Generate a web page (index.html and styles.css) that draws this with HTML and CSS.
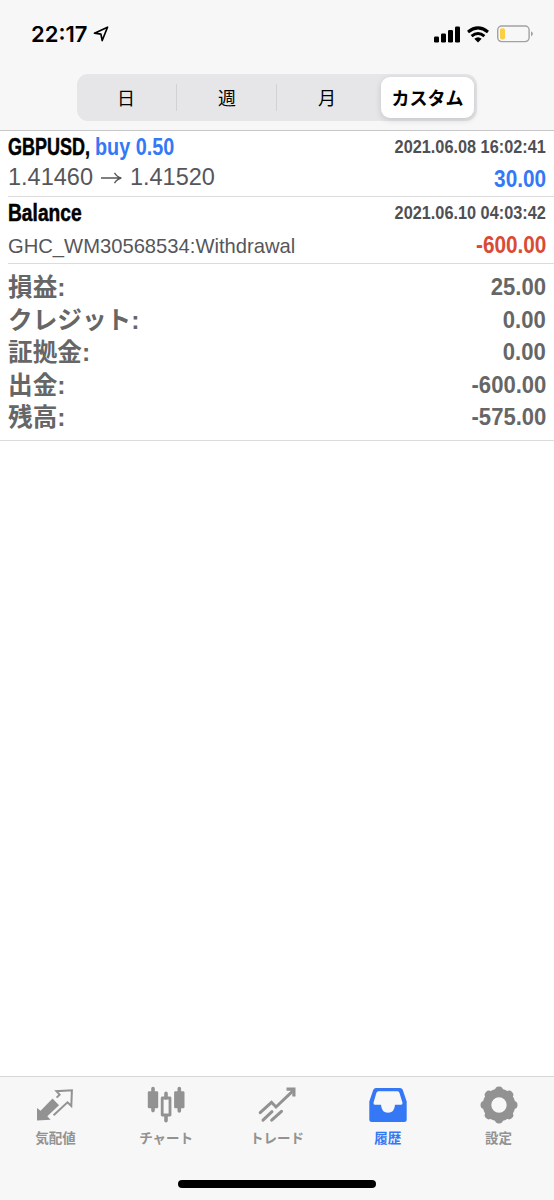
FILE: index.html
```html
<!DOCTYPE html>
<html lang="ja">

<head>
    <meta charset="UTF-8">
    <meta name="viewport" content="width=device-width, initial-scale=1.0">
    <title>履歴</title>
    <link rel="stylesheet" href="styles.css">
</head>

<body>
    <div class="app">
        <header>
            <div class="status">
                <span class="time">22:17</span>
                <svg class="location" width="16" height="16" viewBox="0 0 16 16">
                    <path d="M1.5 7.2 14.5 1.2 9.2 14.5 7.9 8.1Z" fill="none" stroke="#000" stroke-width="1.7" stroke-linejoin="round" />
                </svg>
                <svg class="signal" width="26" height="17" viewBox="0 0 26 17">
                    <rect x="0" y="10.5" width="5" height="6" rx="1.3" />
                    <rect x="7" y="7.5" width="5" height="9" rx="1.3" />
                    <rect x="14" y="4" width="5" height="12.5" rx="1.3" />
                    <rect x="21" y="0.5" width="5" height="16" rx="1.3" />
                </svg>
                <svg class="wifi" width="22" height="17" viewBox="1 0 22 17">
                    <g fill="none" stroke="#000" stroke-width="3">
                        <path d="M2 6Q12 -2.2 22 6" />
                        <path d="M5.6 10.2Q12 4.8 18.4 10.2" />
                    </g>
                    <path d="M8.3 12.7Q12 9.7 15.7 12.7L12 16.4Z" />
                </svg>
                <svg class="battery" width="37" height="18" viewBox="0 0 37 18">
                    <rect x=".7" y="1" width="31.4" height="15.6" rx="4" fill="none" stroke="#a2a2a4" stroke-width="1.4" />
                    <rect x="3" y="3.2" width="5" height="11.2" rx="1.8" fill="#fbcf43" />
                    <path d="M34 6.2Q38 8.8 34 11.5Z" fill="#a2a2a4" />
                </svg>
            </div>
            <div class="segment">
                <div class="seg">日</div>
                <div class="seg">週</div>
                <div class="seg">月</div>
                <div class="seg on">カスタム</div>
            </div>
        </header>

        <main>
            <ul class="history">
                <li>
                    <div class="row">
                        <p class="title"><span class="symbol">GBPUSD,</span><span class="side">buy 0.50</span></p>
                        <span class="date">2021.06.08 16:02:41</span>
                    </div>
                    <div class="row second">
                        <p class="price">1.41460 <svg width="23" height="14" viewBox="0 0 23 14"><path d="M1 7H21M14.5 1.8Q17 6 21.3 7Q17 8 14.5 12.2" fill="none" stroke="#56565a" stroke-width="1.3" /></svg> 1.41520</p>
                        <span class="num blue">30.00</span>
                    </div>
                </li>
                <li>
                    <div class="row">
                        <p class="title"><span class="balance">Balance</span></p>
                        <span class="date">2021.06.10 04:03:42</span>
                    </div>
                    <div class="row second">
                        <p class="comment">GHC_WM30568534:Withdrawal</p>
                        <span class="num red">-600.00</span>
                    </div>
                </li>
            </ul>
            <ul class="total">
                <li><span class="label">損益:</span><span class="num">25.00</span></li>
                <li><span class="label">クレジット:</span><span class="num">0.00</span></li>
                <li><span class="label">証拠金:</span><span class="num">0.00</span></li>
                <li><span class="label">出金:</span><span class="num">-600.00</span></li>
                <li><span class="label">残高:</span><span class="num">-575.00</span></li>
            </ul>
        </main>

        <footer>
            <nav>
                <div class="tab">
                    <svg width="40" height="40" viewBox="0 0 40 40">
                        <path d="M2 34.5V22L5.6 24.8 17.5 12.6 24 19.2 12.3 30.2 15.7 33.7Z" fill="#929292" />
                        <path d="M21.6 11.6 24.6 8.7 21.4 5.2 36.9 4.3 36.3 20 32.5 16.3 18.6 29.3" fill="none" stroke="#929292" stroke-width="2" />
                    </svg>
                    <p>気配値</p>
                </div>
                <div class="tab">
                    <svg width="40" height="40" viewBox="0 0 40 40">
                        <g fill="none" stroke="#929292" stroke-width="3.6" stroke-linecap="round">
                            <path d="M7 2.5V24.6M33.3 2.5V25M20 7.4V12M20 30V34.8" />
                        </g>
                        <rect x="1.8" y="5.2" width="10.4" height="17" rx="1.3" fill="#929292" />
                        <rect x="28.1" y="5.2" width="10.4" height="17" rx="1.3" fill="#929292" />
                        <rect x="16.2" y="12" width="7.8" height="17" fill="none" stroke="#929292" stroke-width="2.8" stroke-linejoin="round" />
                    </svg>
                    <p>チャート</p>
                </div>
                <div class="tab">
                    <svg width="40" height="40" viewBox="0 0 40 40">
                        <g fill="none" stroke="#929292" stroke-width="3" stroke-linecap="round">
                            <path d="M3.2 26.7 14.5 16.3 19 21 36.2 4.7M6 34.2 15 25.7M14.7 34.2 24.5 25.3" />
                        </g>
                        <path d="M29.5 1.5H38.5V10.5H35.3V6.5L33.5 4.7H29.5Z" fill="#929292" />
                    </svg>
                    <p>トレード</p>
                </div>
                <div class="tab on">
                    <svg width="40" height="40" viewBox="0 0 40 40">
                        <path fill-rule="evenodd" d="M8 2H32Q34 2 34.8 4L38.7 15.5V33.5Q38.7 36 36.2 36H3.8Q1.3 36 1.3 33.5V15.5L5.2 4Q6 2 8 2ZM10.5 5.2Q9 5.2 8.4 6.8L5.5 16.8Q5.2 18.8 7 18.8H13Q13.5 26.8 20 26.8 26.5 26.8 27 18.8H33Q34.8 18.8 34.5 16.8L31.4 6.8Q31 5.2 29.5 5.2Z" fill="#3478f6" />
                    </svg>
                    <p>履歴</p>
                </div>
                <div class="tab">
                    <svg width="40" height="40" viewBox="0 0 40 40">
                        <g fill="none" stroke="#929292" transform="translate(20 19)">
                            <circle r="12" stroke-width="8.6" />
                            <path d="M0 -12V-14.5M0 12V14.5M-12 0H-14.5M12 0H14.5M9 9 10.2 10.2M-9 9 -10.2 10.2M9 -9 10.2 -10.2M-9 -9 -10.2 -10.2" stroke-width="8" stroke-linecap="round" />
                        </g>
                    </svg>
                    <p>設定</p>
                </div>
            </nav>
            <div class="home"></div>
        </footer>
    </div>
</body>

</html>
```

FILE: styles.css
```css
* {
    margin: 0;
    padding: 0;
    list-style: none;
    box-sizing: border-box;
}

body {
    background-color: #fff;
    font-family: "Liberation Sans", "Noto Sans CJK JP", sans-serif;
}

svg {
    display: block;
    flex: none;
}

.app {
    height: 1200px;
    display: flex;
    flex-direction: column;
}

header {
    height: 131px;
    background-color: #f7f7f7;
    border-bottom: 1px solid #c8c8ca;
}

.status {
    height: 74px;
    padding: 0 20px 6px 31px;
    display: flex;
    align-items: center;
}

.time {
    width: 58px;
    font-family: Inter, sans-serif;
    font-size: 22px;
    font-weight: 600;
}

.location {
    margin-left: 4px;
}

.signal {
    margin-left: auto;
}

.wifi {
    margin: 0 8px 0 7px;
}

.segment {
    width: 400px;
    height: 47px;
    margin-left: 77px;
    padding: 3px;
    display: flex;
    border-radius: 11px;
    background-color: #e6e6e8;
}

.seg {
    width: 100px;
    height: 41px;
    line-height: 41px;
    font-size: 18px;
    font-family: "Noto Sans CJK JP", sans-serif;
    text-align: center;
    background: linear-gradient(#d2d2d5, #d2d2d5) no-repeat right center / 1px 27px;
}

.seg:nth-child(1) {
    width: 97px;
    padding-right: 5px;
    flex: none;
}

.seg:nth-child(3) {
    background: none;
}

.seg.on {
    width: 93px;
    margin-left: 4px;
    flex: none;
    border-radius: 9px;
    font-weight: 700;
    background: #fff;
    box-shadow: 0 2px 6px rgba(0, 0, 0, .15);
}

main {
    flex: 1;
}

.history li {
    height: 66px;
    margin-left: 8px;
    padding-right: 8px;
    border-bottom: 1px solid #dcdcde;
}

.history li:nth-child(2) {
    height: 67px;
}

.row {
    height: 33px;
    display: flex;
    justify-content: space-between;
    line-height: 32px;
    white-space: nowrap;
}

.title {
    display: flex;
    font-size: 24px;
    font-weight: 700;
}

/* condensed bold */
.symbol,
.side,
.balance,
.date,
.num {
    font-weight: 700;
    transform-origin: left center;
}

.symbol {
    width: 87px;
    transform: scaleX(.75);
    -webkit-text-stroke: .5px #000;
}

.side {
    color: #3478f6;
    transform: scaleX(.825);
}

.balance {
    transform: scaleX(.8);
    -webkit-text-stroke: .5px #000;
}

.date {
    font-size: 18.5px;
    color: #4f4f54;
    transform: scaleX(.88);
    transform-origin: right center;
}

.num {
    font-size: 24px;
    color: #666;
    transform: scaleX(.865);
    transform-origin: right center;
}

.second {
    height: 32px;
    line-height: 29px;
}

.price {
    display: flex;
    align-items: center;
    gap: 7px;
    height: 27px;
    font-size: 23.5px;
    color: #56565a;
}

.comment {
    font-size: 20.2px;
    line-height: 32px;
    color: #56565a;
}

.blue {
    color: #3478f6;
}

.red {
    color: #d94b35;
}

.total {
    height: 177px;
    padding: 6px 8px 0;
    border-bottom: 1px solid #dcdcde;
}

.total li {
    height: 32.5px;
    line-height: 34px;
    display: flex;
    justify-content: space-between;
    color: #666;
}

.total .label {
    font-size: 25px;
    font-weight: 700;
    transform: scaleX(.985);
    transform-origin: left center;
}

.total .num {
    transform: scaleX(.92);
}

footer {
    height: 124px;
    border-top: 1px solid #d8d8da;
    background-color: #f7f7f7;
}

nav {
    display: flex;
    height: 100px;
    padding-top: 9px;
}

.tab {
    flex: 1;
    display: flex;
    flex-direction: column;
    align-items: center;
    color: #929292;
    font-family: "Noto Sans CJK JP", sans-serif;
    font-size: 13.5px;
    font-weight: 700;
    line-height: 20px;
}

.tab p {
    margin-top: 1px;
}

.tab.on {
    color: #3478f6;
}

.home {
    width: 198px;
    height: 8px;
    margin: 3px auto 0;
    border-radius: 4px;
    background-color: #000;
}
```
